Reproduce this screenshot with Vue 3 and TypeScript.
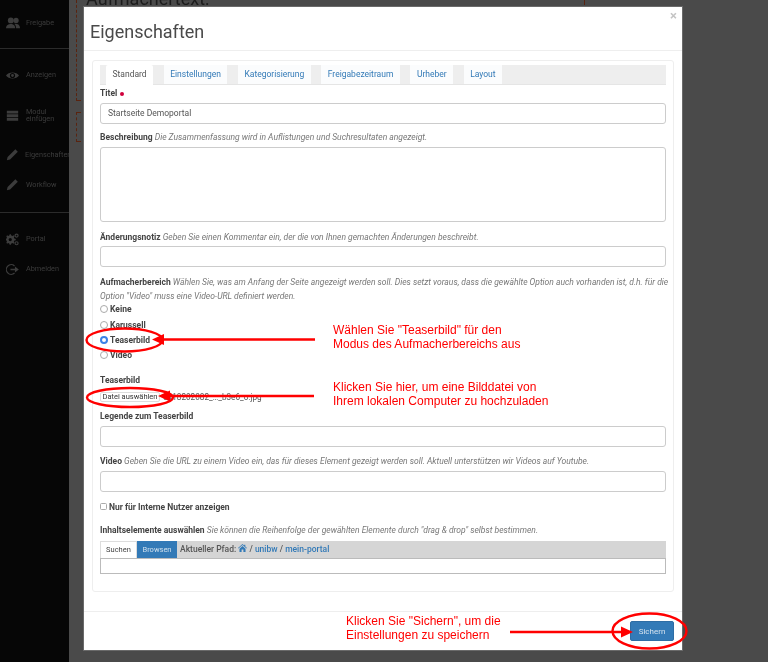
<template>
  <div class="page">
    <!-- page behind the dialog, dimmed by the backdrop -->
    <div class="behind" aria-hidden="true">
      <div class="behind__title">Aufmachertext:</div>
      <i class="dash dash--a"></i>
      <i class="dash dash--b"></i>
      <i class="dash dash--c"></i>
    </div>

    <aside class="side">
      <template v-for="group in sideGroups" :key="group.id">
        <div class="side__group" :class="group.id">
          <a v-for="item in group.items" :key="item.label" class="side__item" :class="item.cls">
            <svg class="side__icon" viewBox="0 0 16 16" v-html="item.icon"></svg>
            <span>{{ item.label }}</span>
          </a>
        </div>
      </template>
    </aside>

    <main class="stage">
      <section class="modal">
        <header class="modal__head">
          <h1>Eigenschaften</h1>
          <span class="modal__close">×</span>
        </header>

        <div class="modal__body">
          <div class="panel">
            <nav class="tabs">
              <a
                v-for="tab in tabs"
                :key="tab"
                class="tab"
                :class="{ 'tab--on': tab === 'Standard' }"
              >{{ tab }}</a>
            </nav>

            <div class="field field--title">
              <label>Titel <i class="req"></i></label>
              <div class="input input--text">Startseite Demoportal</div>
            </div>

            <div class="field field--desc">
              <label>Beschreibung <em>Die Zusammenfassung wird in Auflistungen und Suchresultaten angezeigt.</em></label>
              <div class="input input--area"></div>
            </div>

            <div class="field field--note">
              <label>Änderungsnotiz <em>Geben Sie einen Kommentar ein, der die von Ihnen gemachten Änderungen beschreibt.</em></label>
              <div class="input"></div>
            </div>

            <div class="field field--lead">
              <label>Aufmacherbereich <em>Wählen Sie, was am Anfang der Seite angezeigt werden soll. Dies setzt voraus, dass die gewählte Option auch vorhanden ist, d.h. für die<br />Option "Video" muss eine Video-URL definiert werden.</em></label>
              <div class="radios">
                <div v-for="opt in leadOptions" :key="opt" class="radio">
                  <i class="radio__dot" :class="{ 'radio__dot--on': opt === 'Teaserbild' }"></i>
                  <b>{{ opt }}</b>
                </div>
              </div>
            </div>

            <div class="field field--file">
              <label>Teaserbild</label>
              <div class="file">
                <span class="file__btn">Datei auswählen</span>
                <span class="file__name">6418202082_…_b3e6_o.jpg</span>
              </div>
            </div>

            <div class="field field--legend">
              <label>Legende zum Teaserbild</label>
              <div class="input"></div>
            </div>

            <div class="field field--video">
              <label>Video <em>Geben Sie die URL zu einem Video ein, das für dieses Element gezeigt werden soll. Aktuell unterstützen wir Videos auf Youtube.</em></label>
              <div class="input"></div>
            </div>

            <div class="check"><i class="check__box"></i><b>Nur für Interne Nutzer anzeigen</b></div>

            <div class="field field--items">
              <label>Inhaltselemente auswählen <em>Sie können die Reihenfolge der gewählten Elemente durch "drag &amp; drop" selbst bestimmen.</em></label>
              <div class="picker">
                <div class="picker__bar">
                  <span class="picker__tab">Suchen</span>
                  <span class="picker__tab picker__tab--on">Browsen</span>
                  <span class="picker__path">
                    Aktueller Pfad:
                    <svg class="home" viewBox="0 0 16 14"><path d="M8 0 L11 2.7 V1 H13 V4.5 L16 7.2 L15.2 8 L8 1.8 L0.8 8 L0 7.2 Z M2.6 8.3 L8 3.6 L13.4 8.3 V14 H9.6 V9.8 H6.4 V14 H2.6 Z" /></svg>
                    / <a>unibw</a> / <a>mein-portal</a>
                  </span>
                </div>
                <div class="picker__input"></div>
              </div>
            </div>
          </div>
        </div>

        <footer class="modal__foot">
          <button class="save" type="button">Sichern</button>
        </footer>
      </section>
    </main>

    <!-- red hand-drawn annotations over the screenshot -->
    <svg class="marks" width="768" height="662" viewBox="0 0 768 662" aria-hidden="true">
      <g fill="none" stroke="#f00" stroke-width="2.4">
        <ellipse cx="124.5" cy="340" rx="38" ry="11.5" />
        <ellipse cx="130" cy="397.5" rx="43" ry="9.5" />
        <ellipse cx="649.5" cy="631" rx="37" ry="17.5" />
        <path d="M315 339.5 H160 M314 396 H166 M510 632 H626" />
      </g>
      <g fill="#f00">
        <path d="M152 339.5 L164 334 V345 Z" />
        <path d="M158 396 L170 390.5 V401.5 Z" />
        <path d="M633 632 L621 626.5 V637.5 Z" />
      </g>
    </svg>
    <p class="note note--a">Wählen Sie "Teaserbild" für den<br />Modus des Aufmacherbereichs aus</p>
    <p class="note note--b">Klicken Sie hier, um eine Bilddatei von<br />Ihrem lokalen Computer zu hochzuladen</p>
    <p class="note note--c">Klicken Sie "Sichern", um die<br />Einstellungen zu speichern</p>
  </div>
</template>

<script setup lang="ts">
const pencil = '<path d="M11.5 1.5 L14.5 4.5 L5 14 L1 15 L2 11 Z" />'

const sideGroups = [
  {
    id: 'g-share',
    items: [
      {
        label: 'Freigabe',
        cls: 'side__item--share',
        icon: '<circle cx="5.5" cy="5" r="3.4" /><path d="M0 14 C0 10 3 9 5.5 9 C8 9 10.5 10 10.5 14 Z" /><circle cx="11.5" cy="5" r="3" /><path d="M11.5 14 C11.5 11 10.5 9.6 9.5 9 C10.5 8.6 16 8.4 16 14 Z" />',
      },
    ],
  },
  {
    id: 'g-edit',
    items: [
      {
        label: 'Anzeigen',
        cls: 'side__item--view',
        icon: '<path fill-rule="evenodd" d="M0 8 C3 3 13 3 16 8 C13 13 3 13 0 8 Z M8 4.8 A3.2 3.2 0 1 0 8 11.2 A3.2 3.2 0 1 0 8 4.8 Z" /><circle cx="8" cy="8" r="1.7" />',
      },
      {
        label: 'Modul einfügen',
        cls: 'side__item--wrap',
        icon: '<path d="M1 2 H15 V5.5 H1 Z M1 6.5 H15 V10 H1 Z M1 11 H15 V14.5 H1 Z" />',
      },
      { label: 'Eigenschaften', cls: 'side__item--props', icon: pencil },
      { label: 'Workflow', cls: '', icon: pencil },
    ],
  },
  {
    id: 'g-user',
    items: [
      {
        label: 'Portal',
        cls: '',
        icon: '<path fill-rule="evenodd" d="M5.5 4 L7 4.6 L8.4 3.8 L9.5 5 L8.7 6.4 L9.3 7.8 L11 8.3 V9.8 L9.3 10.3 L8.7 11.7 L9.5 13 L8.4 14.2 L7 13.4 L5.5 14 L5 15.6 H3.5 L3 14 L1.6 13.4 L0.4 14.2 L-0.6 13 L0.2 11.7 L-0.4 10.3 L-1 9.8 V8.3 L-0.4 7.8 L0.2 6.4 L-0.6 5 L0.4 3.8 L1.6 4.6 L3 4 L3.5 2.6 H5 Z M4.2 7 A2 2 0 1 0 4.2 11 A2 2 0 1 0 4.2 7 Z" transform="translate(1 -1)" /><path fill-rule="evenodd" d="M13 0.5 A2.6 2.6 0 1 0 13 5.7 A2.6 2.6 0 1 0 13 0.5 Z M13 2 A1.1 1.1 0 1 1 13 4.2 A1.1 1.1 0 1 1 13 2 Z" /><path fill-rule="evenodd" d="M13 10 A2.6 2.6 0 1 0 13 15.2 A2.6 2.6 0 1 0 13 10 Z M13 11.5 A1.1 1.1 0 1 1 13 13.7 A1.1 1.1 0 1 1 13 11.5 Z" />',
      },
      {
        label: 'Abmelden',
        cls: '',
        icon: '<path d="M10.5 3.6 A6 6 0 1 0 10.5 12.4" fill="none" stroke="currentColor" stroke-width="1.6" /><path d="M5.5 7 H11 V4.4 L15.8 8 L11 11.6 V9 H5.5 Z" />',
      },
    ],
  },
]

const tabs = ['Standard', 'Einstellungen', 'Kategorisierung', 'Freigabezeitraum', 'Urheber', 'Layout']
const leadOptions = ['Keine', 'Karussell', 'Teaserbild', 'Video']
</script>

<style>
html,
body {
  margin: 0;
  background: #4a4a4a;
}
</style>

<style scoped>
.page {
  position: relative;
  display: flex;
  width: 768px;
  height: 662px;
  overflow: hidden;
  background: #4a4a4a;
  font-family: Roboto, "Liberation Sans", sans-serif;
  color: #555;
}

/* the reference is a scaled-down capture, so everything but the red marks is a bit soft */
.behind,
.side,
.stage {
  filter: blur(0.3px);
}

/* ===== page behind ===== */
.behind__title {
  position: absolute;
  left: 86px;
  top: -12px;
  font-size: 18px;
  line-height: 22px;
  color: #1c1c1c;
}
.dash {
  position: absolute;
  border-left: 1.5px dashed #5a2410;
}
.dash--a {
  left: 76px;
  top: 0;
  width: 4px;
  height: 100px;
  border-bottom: 1px solid #5a2410;
}
.dash--b {
  left: 76px;
  top: 112px;
  width: 4px;
  height: 28px;
  border-top: 1px solid #5a2410;
  border-bottom: 1px solid #5a2410;
}
.dash--c {
  left: 584px;
  top: 0;
  height: 5px;
}

/* ===== sidebar ===== */
.side {
  position: relative;
  flex: 0 0 69px;
  width: 69px;
  min-width: 0;
  height: 662px;
  overflow: hidden;
  background: #060606;
}
.side__group {
  display: flex;
  flex-direction: column;
  box-sizing: border-box;
  border-bottom: 1px solid #2b2b2b;
}
.g-share {
  height: 49px;
  padding-top: 14px;
}
.g-edit {
  height: 164px;
  padding-top: 17px;
}
.g-user {
  border-bottom: 0;
  padding-top: 17px;
}
.side__item {
  display: flex;
  align-items: center;
  flex: none;
  gap: 7px;
  height: 18px;
  padding-left: 6px;
  margin-bottom: 12px;
  font-size: 7.3px;
  line-height: 7.5px;
  color: #3c3c3c;
  white-space: nowrap;
}
.side__icon {
  flex: none;
  width: 13px;
  height: 13px;
  fill: #3c3c3c;
  color: #3c3c3c;
}
.side__item--share {
  gap: 6px;
}
.side__item--share .side__icon {
  width: 14px;
  height: 14px;
}
.side__item--view {
  margin-bottom: 22px;
}
.side__item--wrap {
  white-space: normal;
  width: 44px;
  margin-bottom: 21.5px;
}
.side__item--props {
  gap: 6px;
}

/* ===== dialog ===== */
.stage {
  position: relative;
  flex: 1;
  padding: 6px 0 0 14px;
}
.modal {
  display: flex;
  flex-direction: column;
  width: 600px;
  height: 645px;
  box-sizing: border-box;
  background: #fff;
  border: 1px solid #6a6a6a;
}
.modal__head {
  position: relative;
  box-sizing: border-box;
  height: 44px;
  padding: 14px 6px 0;
  border-bottom: 1px solid #eee;
}
.modal__head h1 {
  margin: 0;
  font-size: 18px;
  line-height: 22px;
  font-weight: 400;
  color: #4a4a4a;
}
.modal__close {
  position: absolute;
  right: 5px;
  top: 2px;
  font-size: 13px;
  font-weight: 700;
  line-height: 14px;
  color: #c4c4c4;
}
.modal__body {
  flex: none;
  height: 561px;
  box-sizing: border-box;
  padding: 9px 8px 0;
  border-bottom: 1px solid #eee;
}
.panel {
  box-sizing: border-box;
  height: 532px;
  padding: 4px 7px 0;
  border: 1px solid #eee;
  border-radius: 3px;
}

/* tabs */
.tabs {
  display: flex;
  height: 20px;
  padding-left: 6px;
  background: #eee;
  border-bottom: 1px solid #e5e5e5;
  box-sizing: border-box;
}
.tab {
  display: block;
  height: 19px;
  margin-right: 10.5px;
  padding: 0 6.5px;
  background: #fbfcfd;
  font-size: 8.5px;
  line-height: 19px;
  color: #337ab7;
  white-space: nowrap;
}
.tab--on {
  height: 20px;
  background: #fff;
  color: #555;
  border-radius: 2px 2px 0 0;
}

/* fields */
.field label {
  display: block;
  font-size: 8.5px;
  line-height: 14px;
  font-weight: 700;
  color: #444;
}
.field em {
  font-weight: 400;
  color: #777;
}
.req {
  display: inline-block;
  width: 4px;
  height: 4px;
  margin-left: 1px;
  border-radius: 50%;
  background: #d0003c;
  vertical-align: 0;
}
.input {
  box-sizing: border-box;
  height: 21px;
  margin-top: 3px;
  padding: 0 7px;
  border: 1px solid #ccc;
  border-radius: 3px;
  font-size: 8.5px;
  line-height: 19px;
  color: #555;
}
.input--area {
  height: 75px;
}
.field--title {
  margin-top: 1px;
}
.field--desc {
  margin-top: 6px;
}
.field--note {
  margin-top: 8px;
}
.field--note .input {
  margin-top: 2px;
}
.field--lead {
  margin-top: 8px;
}
.field--lead label {
  white-space: nowrap;
}
.field--file {
  margin-top: 9.5px;
}
.field--legend {
  margin-top: 6px;
}
.field--video {
  margin-top: 7px;
}
.field--items {
  margin-top: 10px;
}

/* radios */
.radios {
  display: flex;
  flex-direction: column;
  margin-top: -1.5px;
}
.radio {
  display: flex;
  align-items: center;
  gap: 2px;
  height: 15.4px;
  font-size: 8.5px;
  color: #444;
}
.radio__dot {
  box-sizing: border-box;
  width: 8px;
  height: 8px;
  border: 1px solid #aaa;
  border-radius: 50%;
  background: #fff;
}
.radio__dot--on {
  border: 2.5px solid #3b82e6;
}

/* file */
.file {
  display: flex;
  align-items: center;
  gap: 3px;
  margin-top: 5px;
  height: 11px;
  color: #555;
}
.file__btn {
  box-sizing: border-box;
  flex: none;
  width: 60px;
  height: 10px;
  background: #fff;
  border: 1px solid #ddd;
  border-radius: 2px;
  font-size: 7.5px;
  text-align: center;
  line-height: 8px;
  color: #333;
  white-space: nowrap;
}
.file__name {
  white-space: nowrap;
  font-size: 8.2px;
}

/* checkbox */
.check {
  display: flex;
  align-items: center;
  gap: 2px;
  height: 12px;
  margin-top: 9px;
  font-size: 8.5px;
  color: #444;
}
.check__box {
  box-sizing: border-box;
  width: 7px;
  height: 7px;
  border: 1px solid #aaa;
  border-radius: 1.5px;
}

/* reference picker */
.picker {
  margin-top: 4px;
}
.picker__bar {
  display: flex;
  height: 18px;
  background: #d5d5d5;
  border-bottom: 1px solid #bbb;
  box-sizing: border-box;
}
.picker__tab {
  box-sizing: border-box;
  width: 37px;
  background: #fff;
  border: 1px solid #ddd;
  border-bottom: 0;
  font-size: 7.5px;
  line-height: 16px;
  text-align: center;
  color: #444;
}
.picker__tab--on {
  width: 40px;
  background: #337ab7;
  border-color: #337ab7;
  color: #cfe0ee;
}
.picker__path {
  padding-left: 3px;
  font-size: 8.5px;
  line-height: 17px;
  font-weight: 500;
  color: #555;
  white-space: nowrap;
}
.picker__path a {
  color: #337ab7;
}
.home {
  width: 9px;
  height: 8px;
  fill: #337ab7;
  vertical-align: -0.5px;
}
.picker__input {
  box-sizing: border-box;
  height: 15px;
  border: 1px solid #bbb;
  border-top: 0;
}

/* footer */
.modal__foot {
  display: flex;
  justify-content: flex-end;
  padding: 9px 8px 0 0;
}
.save {
  width: 44px;
  height: 20px;
  padding: 0;
  border: 1px solid #2e6da4;
  border-radius: 2px;
  background: #337ab7;
  font-family: inherit;
  font-size: 8px;
  color: #d5e3ef;
}

/* ===== annotations ===== */
.marks {
  position: absolute;
  left: 0;
  top: 0;
  pointer-events: none;
}
.note {
  position: absolute;
  margin: 0;
  font-family: "Liberation Sans", Arial, sans-serif;
  font-size: 12px;
  line-height: 14px;
  color: #f00;
  white-space: nowrap;
}
.note--a {
  left: 333px;
  top: 323px;
}
.note--b {
  left: 333px;
  top: 380px;
}
.note--c {
  left: 346px;
  top: 614px;
}
</style>
